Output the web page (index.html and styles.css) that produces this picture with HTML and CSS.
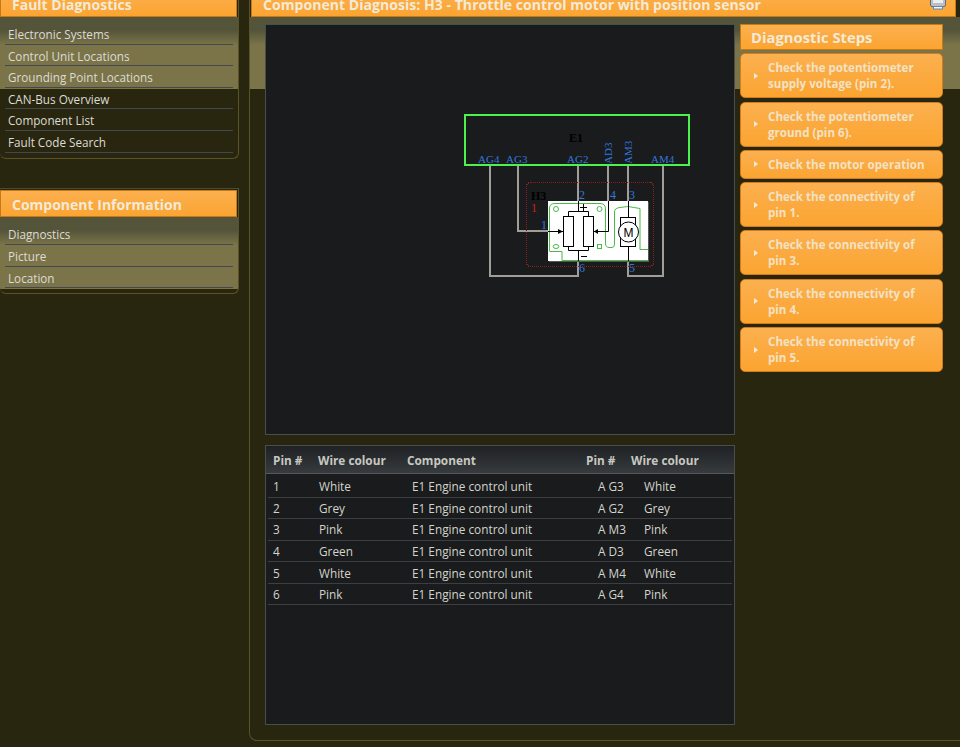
FILE: index.html
```html
<!DOCTYPE html>
<html lang="en">
<head>
<meta charset="utf-8">
<title>Component Diagnosis</title>
<link rel="stylesheet" href="styles.css">
</head>
<body>
<div class="page">
  <aside class="sidebar">
    <section class="panel">
      <h2 class="panel-title">Fault Diagnostics</h2>
      <ul class="menu">
        <li>Electronic Systems</li>
        <li>Control Unit Locations</li>
        <li>Grounding Point Locations</li>
        <li>CAN-Bus Overview</li>
        <li>Component List</li>
        <li>Fault Code Search</li>
      </ul>
    </section>
    <section class="panel">
      <h2 class="panel-title">Component Information</h2>
      <ul class="menu">
        <li>Diagnostics</li>
        <li>Picture</li>
        <li>Location</li>
      </ul>
    </section>
  </aside>
  <main class="main">
    <header class="main-title">
      <h1>Component Diagnosis: H3 - Throttle control motor with position sensor</h1>
      <svg class="printer" viewBox="0 0 16 16" width="16" height="16" aria-hidden="true">
        <rect x="0.500" y="4.500" width="15" height="8" rx="1.500" fill="#bcc0c5" stroke="#666b70"/>
        <rect x="3" y="6" width="10" height="3" fill="#eceef0"/>
        <rect x="3.500" y="12.500" width="9" height="2.500" fill="#f4f7fb" stroke="#5f86c0"/>
      </svg>
    </header>
    <div class="main-body">
      <div class="content">
        <div class="diagram">
          <svg class="schematic" viewBox="266 25 468 408" width="468" height="408">
            <g class="wire">
              <path d="M490 165V276H578V261"/>
              <path d="M518 165V231H548"/>
              <path d="M578 165V201"/>
              <path d="M608 165V201"/>
              <path d="M628 165V201"/>
              <path d="M663 165V276H628V261"/>
            </g>
            <rect class="housing" x="526.500" y="182.500" width="127" height="84" rx="4"/>
            <rect class="shadow" x="549" y="202" width="100" height="60"/>
            <rect class="sheet" x="548" y="201" width="100" height="60"/>
            <g class="trace">
              <path d="M549.500 251V208Q549.500 203.500 555 203.500H600Q605.500 203.500 605.500 209V243Q605.500 247.500 609 247.500H612Q614.500 247.500 614.500 244V212Q614.500 208 620 207.500L628 206.500L640 208.500V249.500H648"/>
              <path d="M549.500 251.500H562V260.500H648"/>
              <circle cx="556" cy="209" r="2.500"/>
              <circle cx="599.500" cy="209" r="2.500"/>
              <ellipse cx="556" cy="246.500" rx="2.800" ry="2"/>
              <rect x="597.500" y="244.500" width="4" height="4"/>
            </g>
            <g class="ink">
              <rect x="563.500" y="216.500" width="10" height="30"/>
              <rect x="583.500" y="216.500" width="10" height="30"/>
              <path d="M568.500 216.500V211.500H588.500V216.500M568.500 246.500V250.500H588.500V246.500"/>
              <path d="M578.500 201V211.500M578.500 250.500V261"/>
              <path d="M548 231.500H563M594 231.500H608.500V201"/>
              <path d="M580 207.500H587M583.500 204V211M581 256.500H587"/>
              <rect x="620.500" y="217.500" width="15" height="29"/>
              <path d="M628.500 201V217.500M628.500 246.500V261"/>
              <circle class="rotor" cx="628.500" cy="232" r="10"/>
            </g>
            <path class="arrow" d="M558 229V234L563 231.500Z"/>
            <path class="arrow" d="M598 229V234L594 231.500Z"/>
            <text class="motor" x="628.500" y="236.500" text-anchor="middle">M</text>
            <rect class="unit" x="465" y="115" width="224" height="50"/>
            <text class="dark" x="569" y="142">E1</text>
            <text class="dark" x="531" y="200">H3</text>
            <text class="red" x="531" y="212">1</text>
            <g class="blue">
              <text x="478" y="163">AG4</text>
              <text x="506" y="163">AG3</text>
              <text x="567" y="163">AG2</text>
              <text x="651" y="163">AM4</text>
              <text x="612" y="164" transform="rotate(-90 612 164)">AD3</text>
              <text x="632" y="164" transform="rotate(-90 632 164)">AM3</text>
            </g>
            <g class="blue pin-no">
              <text x="541" y="229">1</text>
              <text x="579" y="199">2</text>
              <text x="610" y="199">4</text>
              <text x="629" y="199">3</text>
              <text x="579" y="272">6</text>
              <text x="629" y="272">5</text>
            </g>
          </svg>
        </div>
        <div class="pins">
          <table class="pin-table">
            <colgroup><col class="c1"><col class="c2"><col class="c3"><col class="c4"><col class="c5"></colgroup>
            <thead>
              <tr><th>Pin #</th><th>Wire colour</th><th>Component</th><th>Pin #</th><th>Wire colour</th></tr>
            </thead>
            <tbody>
              <tr><td>1</td><td>White</td><td>E1 Engine control unit</td><td>A G3</td><td>White</td></tr>
              <tr><td>2</td><td>Grey</td><td>E1 Engine control unit</td><td>A G2</td><td>Grey</td></tr>
              <tr><td>3</td><td>Pink</td><td>E1 Engine control unit</td><td>A M3</td><td>Pink</td></tr>
              <tr><td>4</td><td>Green</td><td>E1 Engine control unit</td><td>A D3</td><td>Green</td></tr>
              <tr><td>5</td><td>White</td><td>E1 Engine control unit</td><td>A M4</td><td>White</td></tr>
              <tr><td>6</td><td>Pink</td><td>E1 Engine control unit</td><td>A G4</td><td>Pink</td></tr>
            </tbody>
          </table>
        </div>
      </div>
      <nav class="steps">
        <h2 class="steps-title">Diagnostic Steps</h2>
        <a class="step">Check the potentiometer supply voltage (pin 2).</a>
        <a class="step">Check the potentiometer ground (pin 6).</a>
        <a class="step">Check the motor operation</a>
        <a class="step">Check the connectivity of pin 1.</a>
        <a class="step">Check the connectivity of pin 3.</a>
        <a class="step">Check the connectivity of pin 4.</a>
        <a class="step">Check the connectivity of pin 5.</a>
      </nav>
    </div>
  </main>
</div>
</body>
</html>
```
FILE: styles.css
```css
* { box-sizing: border-box; }
html, body { height: 100%; }
body {
  margin: 0;
  overflow: hidden;
  background: #292610;
  font-family: "Open Sans", "Noto Sans", sans-serif;
  font-size: 11.700px;
  color: #d8d8d0;
}
h1, h2, ul { margin: 0; padding: 0; }
.page {
  display: flex;
  gap: 10px;
  margin-top: -12px;
  height: 753px;
}
.sidebar {
  width: 239px;
  flex: none;
  display: flex;
  flex-direction: column;
  gap: 29.800px;
}
.panel {
  border: 1px solid #5a5228;
  border-left: 0;
  border-top-color: #4a4a2c;
  border-radius: 0 0 6px 6px;
  padding-top: 1px;
  background: linear-gradient(#54543a 0, #54543a 13px, #7b7449 28px, #7b7449 72px) no-repeat 0 28px / 100% 72px;
}
.panel-title {
  height: 27px;
  margin-right: 1px;
  padding: 4px 0 0 11px;
  border: 1px solid #c67a16;
  background: linear-gradient(#fcb04f, #fba431);
  color: #f3ead8;
  font-size: 14px;
  line-height: 20px;
  font-weight: 700;
}
.menu {
  list-style: none;
  padding: 5px;
  margin-top: 1px;
}
.menu li {
  height: 21.600px;
  padding: 2px 3px 0;
  line-height: 18px;
  border-bottom: 1px solid #434850;
  color: #dcdcd4;
  white-space: nowrap;
}
.main {
  flex: 1;
  display: flex;
  flex-direction: column;
  border: 1px solid #5a5228;
  border-right: 0;
  border-radius: 0 0 0 8px;
  padding: 1px 4px 0 1px;
  background: linear-gradient(#54543a 0, #54543a 13px, #7b7449 28px, #7b7449 72px) no-repeat 0 28px / 100% 72px;
}
.main-title {
  height: 27px;
  flex: none;
  display: flex;
  justify-content: space-between;
  padding: 4px 9px 0 11px;
  border: 1px solid #c67a16;
  background: linear-gradient(#fcb04f, #fba431);
  overflow: hidden;
}
.main-title h1 {
  color: #f3ead8;
  font-size: 14.100px;
  line-height: 20px;
  font-weight: 700;
  white-space: nowrap;
}
.printer { flex: none; margin-top: -1px; }
.main-body {
  display: flex;
  gap: 5px;
  padding: 7px 0 0 14px;
}
.content {
  width: 470px;
  flex: none;
  display: flex;
  flex-direction: column;
  gap: 10px;
}
.diagram {
  height: 411px;
  border: 1px solid #4a4d50;
  background: #191b1d;
}
.schematic { display: block; }
.wire path { fill: none; stroke: #a19e97; stroke-width: 2; }
.housing { fill: none; stroke: #8a1f22; stroke-width: 1.500; stroke-dasharray: 1 1; shape-rendering: crispEdges; }
.shadow { fill: #555; }
.sheet { fill: #fff; }
.trace * { fill: none; stroke: #4cb848; stroke-width: 1; }
.ink * { fill: none; stroke: #000; stroke-width: 1; }
.ink .rotor { fill: #fff; }
.arrow { fill: #000; }
.unit { fill: none; stroke: #4df24d; stroke-width: 2; }
.schematic text { font-family: "Liberation Serif", serif; font-size: 11px; }
.schematic .motor { font-family: "Liberation Sans", sans-serif; font-size: 12px; fill: #000; }
.schematic .dark { fill: #000; font-size: 12px; font-weight: 700; }
.schematic .red { fill: #d61f1f; font-size: 12px; }
.blue text { fill: #3377dd; }
.schematic .pin-no text { font-size: 12px; }
.pins {
  height: 280px;
  border: 1px solid #4a4d50;
  background:
    linear-gradient(#55585a, #55585a) no-repeat 0 27px / 100% 1px,
    linear-gradient(#1f2124, #373b3e) no-repeat 0 0 / 100% 27px,
    #191b1d;
  padding: 0 2px;
}
.pin-table {
  width: 464px;
  table-layout: fixed;
  border-collapse: collapse;
  font-size: 11.800px;
}
.c1 { width: 44px; }
.c2 { width: 89px; }
.c3 { width: 179px; }
.c4 { width: 45px; }
.pin-table thead tr { height: 28px; }
.pin-table th {
  padding: 0 0 1px 6px;
  text-align: left;
  font-weight: 700;
  color: #c8c8c0;
}
.pin-table th:first-child,
.pin-table td:first-child { padding-left: 5px; }
.pin-table td {
  height: 21.600px;
  padding: 0 0 0 6px;
  border-bottom: 1px solid #3c3f42;
  color: #d4d4cc;
  white-space: nowrap;
}
.pin-table tbody tr:first-child td {
  height: 23px;
  padding-top: 1px;
}
.pin-table td:nth-child(2) { padding-left: 7px; }
.pin-table td:nth-child(3) { padding-left: 11px; }
.pin-table td:nth-child(4) { padding-left: 18px; }
.pin-table td:nth-child(5) { padding-left: 19px; }
.steps {
  width: 203px;
  flex: none;
  display: flex;
  flex-direction: column;
  gap: 3.300px;
}
.steps-title {
  height: 26px;
  padding: 2px 0 0 10px;
  border: 1px solid #c67a16;
  background: linear-gradient(#fcb04f, #fba431);
  color: #f3ead8;
  font-size: 14.800px;
  line-height: 20px;
  font-weight: 700;
}
.step {
  position: relative;
  display: block;
  padding: 6px 10px 5px 27px;
  border: 1px solid #d27d1b;
  border-radius: 5px;
  background: linear-gradient(#fcb04f, #fba431);
  color: #f2e2c4;
  font-size: 11.600px;
  line-height: 16px;
  font-weight: 700;
}
.step::before {
  content: "";
  position: absolute;
  left: 13px;
  top: 50%;
  margin-top: -3px;
  border-left: 4px solid #f6ecd8;
  border-top: 3px solid transparent;
  border-bottom: 3px solid transparent;
}
```
